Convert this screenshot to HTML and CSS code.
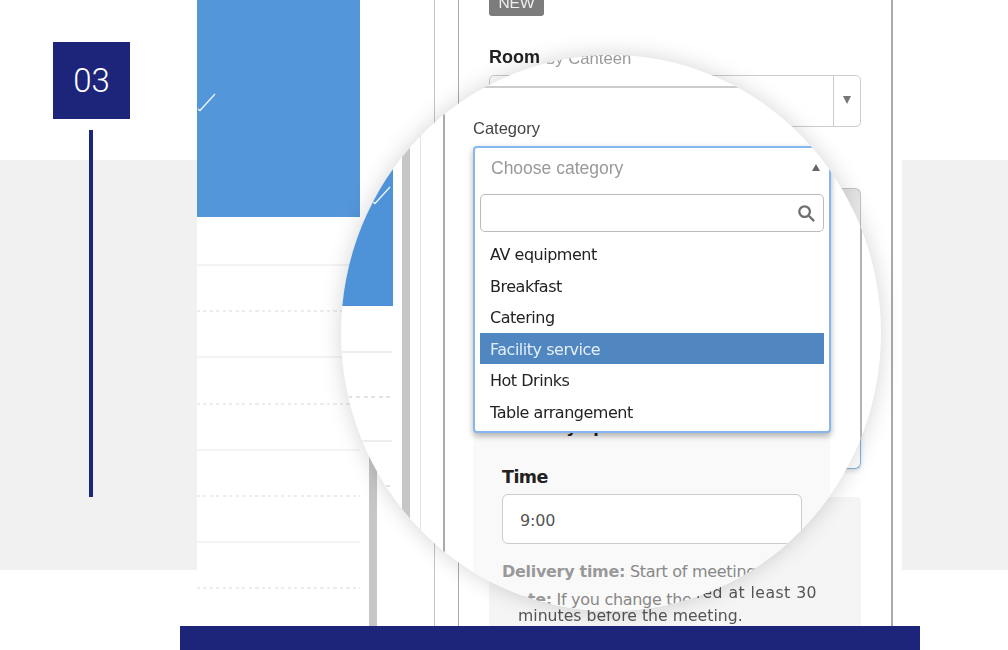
FILE: index.html
```html
<!DOCTYPE html>
<html lang="en">
<head>
<meta charset="utf-8">
<title>Step 03</title>
<link rel="stylesheet" href="styles.css">
</head>
<body>
<main class="stage">
  <div class="band"></div>
  <section class="shot">
    <div class="shot-tile"></div>
    <svg class="tick tick-out" viewBox="0 0 20 20"><path d="M1 17l2 1.5L18 2"/></svg>
    <div class="rules">
      <hr class="rule"><hr class="rule dash"><hr class="rule"><hr class="rule dash"><hr class="rule"><hr class="rule dash"><hr class="rule"><hr class="rule dash">
    </div>
    <div class="vbar"></div>
    <div class="vline vline-a"></div>
    <div class="vline vline-b"></div>
    <div class="vline vline-c"></div>
    <span class="new-tag">NEW</span>
    <strong class="room-label">Room</strong>
    <div class="room-select"><span class="room-caret"></span></div>
    <div class="text-box"></div>
    <div class="note-panel">
      <p class="note-out"><span class="note-first">red at least 30</span><br>minutes before the meeting.</p>
    </div>
  </section>

  <div class="lens">
    <div class="lens-inner">
      <span class="lens-sub">by Canteen</span>
      <div class="lens-hline"></div>
      <div class="lens-tile"></div>
      <svg class="tick tick-in" viewBox="0 0 20 20"><path d="M1 17l2 1.5L18 2"/></svg>
      <div class="lens-rule lr1"></div>
      <div class="lens-rule lr2 dash"></div>
      <div class="lens-rule lr3"></div>
      <div class="lens-rule lr4 dash"></div>
      <div class="lens-vbar"></div>
      <div class="lens-vline lv1"></div>
      <div class="lens-vline lv2"></div>
      <div class="lens-vline lv3"></div>
      <div class="lens-panel">
        <h4 class="panel-head">Delivery options</h4>
        <h4 class="time-label">Time</h4>
        <div class="time-input">9:00</div>
        <p class="delivery"><b>Delivery time:</b> Start of meeting</p>
        <p class="delivery note"><b>Note:</b> If you change the</p>
      </div>
      <div class="field">
        <label class="field-label">Category</label>
        <div class="combo">
          <div class="combo-head"><span>Choose category</span><i class="caret-up"></i></div>
          <div class="search">
            <svg class="search-icon" viewBox="0 0 20 20"><circle cx="8" cy="8" r="5.6"/><path d="M12.4 12.4L18 18"/></svg>
          </div>
          <ul class="options">
            <li>AV equipment</li>
            <li>Breakfast</li>
            <li>Catering</li>
            <li class="active">Facility service</li>
            <li>Hot Drinks</li>
            <li>Table arrangement</li>
          </ul>
        </div>
      </div>
    </div>
  </div>

  <div class="step">03</div>
  <div class="step-line"></div>
  <div class="footer-bar"></div>
</main>
</body>
</html>
```
FILE: styles.css
```css
* { box-sizing: border-box; }
html, body { margin: 0; padding: 0; background: #fff; }
body { font-family: "DejaVu Sans", sans-serif; color: #333; }
.stage { position: relative; width: 1008px; height: 650px; overflow: hidden; }
.band { position: absolute; left: 0; right: 0; top: 160px; height: 410px; background: #f1f1f1; }
.shot { position: absolute; left: 197px; top: 0; width: 705px; height: 650px; background: #fff; }
.shot > * { filter: blur(.5px); }
.shot-tile { position: absolute; left: 0; top: 0; width: 163px; height: 217px; background: #5496da; }
.tick { position: absolute; fill: none; stroke: #eaf3fb; stroke-width: 1.4; }
.tick-out { left: 0; top: 92px; width: 20px; height: 20px; }
.rules { position: absolute; left: 0; top: 264px; width: 163px; display: flex; flex-direction: column; gap: 44.2px; }
.rule { margin: 0; border: 0; height: 2px; width: 100%; background: #f4f4f4; }
.rule.dash { background: repeating-linear-gradient(90deg, #ececec 0 3px, transparent 3px 6.5px); }
.vbar { position: absolute; left: 172px; top: 300px; bottom: 0; width: 8px; background: #c6c6c6; }
.vline { position: absolute; top: 0; bottom: 0; width: 1px; background: #c4c4c4; }
.vline-a { left: 237px; }
.vline-b { left: 261px; background: #aaa; }
.vline-c { left: 694px; background: #aaa; width: 2px; }
.new-tag { position: absolute; left: 292px; top: -8px; width: 55px; height: 24px; border-radius: 3px; background: #7c7c7c; color: #eee; font-family: "Liberation Sans", sans-serif; font-size: 15.5px; line-height: 22px; text-align: center; }
.room-label { position: absolute; left: 292px; top: 46px; font-family: "Liberation Sans", sans-serif; font-size: 18px; line-height: 22px; color: #222; }
.room-select { position: absolute; left: 292px; top: 75px; width: 372px; height: 52px; border: 1px solid #ccc; border-radius: 5px; }
.room-select::after { content: ""; position: absolute; right: 26px; top: 0; bottom: 0; width: 1px; background: #ccc; }
.room-caret { position: absolute; right: 9px; top: 20px; width: 0; height: 0; border: 4.5px solid transparent; border-top: 8px solid #777; }
.text-box { position: absolute; left: 292px; top: 188px; width: 372px; height: 281px; }
.text-box::before { content: ""; position: absolute; inset: 0 0 50% 0; border: 1px solid #c4c4c4; border-bottom: 0; border-radius: 6px 6px 0 0; background: linear-gradient(#e2e2e2, #fff 30%); }
.text-box::after { content: ""; position: absolute; inset: 50% 0 0 0; border: 1px solid #7fb2e5; border-top: 0; border-radius: 0 0 6px 6px; box-shadow: 0 2px 4px rgba(0,0,0,.15); }
.note-panel { position: absolute; left: 292px; top: 497px; width: 372px; height: 140px; background: #f5f5f5; border-radius: 4px; padding: 85px 44px 0 29px; }
.note-out { margin: 0; font-size: 15.7px; line-height: 22.5px; color: #555; white-space: nowrap; }
.note-first { display: block; text-align: right; margin-bottom: -22.5px; letter-spacing: .45px; }

.lens { position: absolute; left: 341px; top: 55px; width: 540px; height: 556px; border-radius: 50%; background: #fff; overflow: hidden; box-shadow: 0 0 22px rgba(0,0,0,.17); }
.lens-inner { position: absolute; inset: 0; filter: blur(.55px); }
.lens-sub { position: absolute; left: 205px; top: -6px; font-family: "Liberation Sans", sans-serif; font-size: 16.7px; line-height: 20px; color: #999; white-space: nowrap; }
.lens-hline { position: absolute; left: 130px; right: 130px; top: 31px; height: 1.5px; background: #ccc; }
.lens-tile { position: absolute; left: 0; top: 0; width: 52px; height: 251px; background: #4e93d8; }
.tick-in { left: 31px; top: 130px; width: 20px; height: 20px; }
.lens-rule { position: absolute; left: 0; width: 51px; height: 1.5px; background: #eee; }
.lens-rule.dash { background: repeating-linear-gradient(90deg, #e2e2e2 0 4px, transparent 4px 7.5px); }
.lr1 { top: 296px; } .lr2 { top: 341px; } .lr3 { top: 385px; } .lr4 { top: 430px; }
.lens-vbar { position: absolute; left: 61px; top: 0; bottom: 0; width: 8px; background: #c6c6c6; }
.lens-vline { position: absolute; top: 0; bottom: 0; width: 1px; background: #e2e2e2; }
.lv1 { left: 79px; }
.lv2 { left: 102px; width: 1.5px; background: #aaa; }
.lv3 { left: 519px; width: 1.5px; background: #b4b4b4; }
.lens-panel { position: absolute; left: 132px; top: 358px; width: 357px; height: 220px; background: #f9f9f9; padding: 3px 0 0 29px; }
.panel-head { margin: 0 0 25px; font-size: 16px; line-height: 24px; color: #222; font-weight: 700; white-space: nowrap; }
.time-label { margin: 0 0 5px; font-size: 17.5px; letter-spacing: -.55px; line-height: 24px; color: #222; font-weight: 700; }
.time-input { width: 300px; height: 50px; border: 1px solid #ccc; border-radius: 6px; background: #fff; padding: 0 17px; font-size: 16px; letter-spacing: -.2px; line-height: 51px; color: #555; }
.delivery { margin: 17px 0 0; font-size: 16px; letter-spacing: -.3px; line-height: 22px; color: #888; white-space: nowrap; }
.delivery b { color: #999; }
.delivery.note { margin: 6px 0 0 2px; }
.field { position: absolute; left: 132px; top: 63px; width: 358px; }
.field-label { display: block; font-family: "Liberation Sans", sans-serif; font-size: 16.5px; line-height: 20px; color: #444; margin-bottom: 8px; }
.combo { border: 2px solid #85b8ec; border-radius: 4px; background: #fff; height: 287px; box-shadow: 0 3px 6px rgba(0,0,0,.3); padding: 0 5px; }
.combo-head { display: flex; justify-content: space-between; align-items: center; height: 46px; padding: 0 4px 5px 11px; font-family: "Liberation Sans", sans-serif; font-size: 17.5px; color: #999; }
.caret-up { width: 0; height: 0; border: 4px solid transparent; border-bottom: 7px solid #666; margin-top: -6px; }
.search { height: 38px; border: 1px solid #bbb; border-radius: 5px; display: flex; justify-content: flex-end; align-items: center; padding-right: 7px; }
.search-icon { width: 19px; height: 19px; fill: none; stroke: #6f6f6f; stroke-width: 2.4; }
.options { list-style: none; margin: 6px 0 0; padding: 0; }
.options li { height: 31.5px; line-height: 33px; padding-left: 10px; font-size: 16px; letter-spacing: -.48px; color: #222; }
.options li.active { background: #5187c1; color: #e4eef8; }

.step { position: absolute; left: 53px; top: 42px; width: 77px; height: 77px; background: #1c257a; color: #fff; font-family: Roboto, sans-serif; font-weight: 300; font-size: 33px; line-height: 78px; text-align: center; }
.step-line { position: absolute; left: 89px; top: 130px; width: 4px; height: 367px; background: #1c257a; }
.footer-bar { position: absolute; left: 180px; top: 626px; width: 740px; height: 24px; background: #1c257a; }
```
